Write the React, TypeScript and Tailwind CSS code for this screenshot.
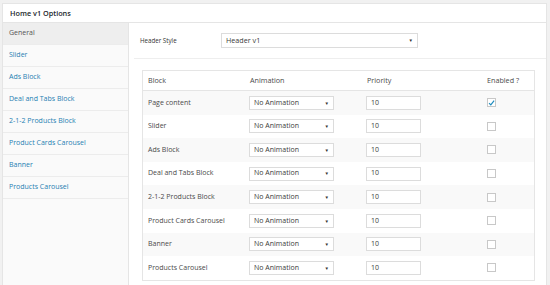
import React from 'react';

const tabs = [
    'General',
    'Slider',
    'Ads Block',
    'Deal and Tabs Block',
    '2-1-2 Products Block',
    'Product Cards Carousel',
    'Banner',
    'Products Carousel',
];

const blocks = [
    { name: 'Page content', enabled: true },
    { name: 'Slider', enabled: false },
    { name: 'Ads Block', enabled: false },
    { name: 'Deal and Tabs Block', enabled: false },
    { name: '2-1-2 Products Block', enabled: false },
    { name: 'Product Cards Carousel', enabled: false },
    { name: 'Banner', enabled: false },
    { name: 'Products Carousel', enabled: false },
];

function FakeSelect({ value, className }: { value: string; className: string }) {
    return (
        <div className={`flex items-center justify-between border border-[#dcdcdc] bg-white pl-[4px] pr-[4px] text-[#3a3a3a] ${className}`}>
            <span>{value}</span>
            <span className="text-[4.5px] leading-none text-[#333]">▼</span>
        </div>
    );
}

function Checkbox({ checked }: { checked: boolean }) {
    return (
        <div className="flex h-[9px] w-[9px] items-center justify-center border border-[#c8c8c8] bg-white">
            {checked && (
                <svg width="8" height="8" viewBox="0 0 8 8">
                    <path d="M1.2 4.2 L3.2 6.2 L7 1.4" fill="none" stroke="#1e8cbe" strokeWidth="1.4" />
                </svg>
            )}
        </div>
    );
}

export default function App() {
    return (
        <div
            className="h-[285px] w-[550px] overflow-hidden bg-[#f1f1f1] pl-[2px] pt-[3px] text-[7px] text-[#4a4a4a]"
            style={{ fontFamily: '"Open Sans", "Noto Sans", sans-serif' }}
        >
            <div className="w-[545px] border border-[#e5e5e5] bg-white">
                {/* title bar */}
                <div className="flex h-[19px] items-center border-b border-[#e5e5e5] pl-[7px] text-[7.3px] font-semibold text-[#23282d]">
                    Home v1 Options
                </div>

                <div className="flex">
                    {/* side tabs */}
                    <div className="h-[265px] w-[126px] border-r border-[#e5e5e5] bg-[#fafafa]">
                        {tabs.map((tab, i) => (
                            <div
                                key={tab}
                                className={`flex h-[22px] items-center border-b border-[#ececec] pl-[6px] ${
                                    i === 0 ? 'bg-[#eeeeee] text-[#555]' : 'text-[#1f7fb2]'
                                }`}
                            >
                                {tab}
                            </div>
                        ))}
                    </div>

                    {/* content */}
                    <div className="flex-1 pl-[5px]">
                        <div className="flex h-[36px] items-center border-b border-[#eeeeee] pl-[6px]">
                            <span className="w-[81px] text-[6.2px] text-[#333]">Header Style</span>
                            <FakeSelect value="Header v1" className="h-[15px] w-[197px] text-[7.2px]" />
                        </div>

                        <div className="ml-[8px] mt-[11px] w-[393px] border border-[#e5e5e5]">
                            <div className="grid h-[20px] grid-cols-[104px_117px_121px_1fr] items-center border-b border-[#e5e5e5] text-[7.2px]">
                                <div className="pl-[5px]">Block</div>
                                <div className="pl-[3px]">Animation</div>
                                <div className="pl-[3px]">Priority</div>
                                <div className="pl-[2px]">Enabled ?</div>
                            </div>
                            {blocks.map((b, i) => (
                                <div
                                    key={b.name}
                                    className={`grid h-[23.6px] grid-cols-[104px_117px_121px_1fr] items-center ${
                                        i % 2 === 0 ? 'bg-[#f9f9f9]' : 'bg-white'
                                    }`}
                                >
                                    <div className="pl-[5px]">{b.name}</div>
                                    <div className="pl-[2px]">
                                        <FakeSelect value="No Animation" className="h-[14px] w-[85px]" />
                                    </div>
                                    <div className="pl-[2px]">
                                        <div className="flex h-[14px] w-[55px] items-center border border-[#dcdcdc] bg-white pl-[4px] text-[#3a3a3a]">
                                            10
                                        </div>
                                    </div>
                                    <div className="pl-[2px]">
                                        <Checkbox checked={b.enabled} />
                                    </div>
                                </div>
                            ))}
                        </div>
                    </div>
                </div>
            </div>
        </div>
    );
}
